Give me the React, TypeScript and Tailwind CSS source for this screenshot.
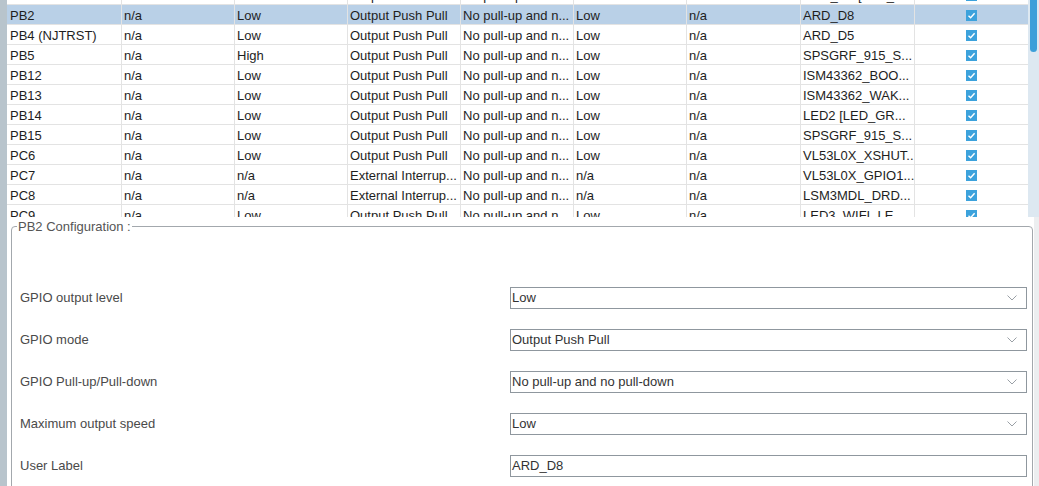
type Pin = {
  name: string;
  signal: string;
  level: string;
  mode: string;
  pull: string;
  speed: string;
  fast: string;
  label: string;
};

const pull = 'No pull-up and n...';

const pins: Pin[] = [
  { name: 'PB1', signal: 'n/a', level: 'Low', mode: 'Output Push Pull', pull, speed: 'Low', fast: 'n/a', label: 'ARD_D6 [LED_...' },
  { name: 'PB2', signal: 'n/a', level: 'Low', mode: 'Output Push Pull', pull, speed: 'Low', fast: 'n/a', label: 'ARD_D8' },
  { name: 'PB4 (NJTRST)', signal: 'n/a', level: 'Low', mode: 'Output Push Pull', pull, speed: 'Low', fast: 'n/a', label: 'ARD_D5' },
  { name: 'PB5', signal: 'n/a', level: 'High', mode: 'Output Push Pull', pull, speed: 'Low', fast: 'n/a', label: 'SPSGRF_915_S...' },
  { name: 'PB12', signal: 'n/a', level: 'Low', mode: 'Output Push Pull', pull, speed: 'Low', fast: 'n/a', label: 'ISM43362_BOO...' },
  { name: 'PB13', signal: 'n/a', level: 'Low', mode: 'Output Push Pull', pull, speed: 'Low', fast: 'n/a', label: 'ISM43362_WAK...' },
  { name: 'PB14', signal: 'n/a', level: 'Low', mode: 'Output Push Pull', pull, speed: 'Low', fast: 'n/a', label: 'LED2 [LED_GR...' },
  { name: 'PB15', signal: 'n/a', level: 'Low', mode: 'Output Push Pull', pull, speed: 'Low', fast: 'n/a', label: 'SPSGRF_915_S...' },
  { name: 'PC6', signal: 'n/a', level: 'Low', mode: 'Output Push Pull', pull, speed: 'Low', fast: 'n/a', label: 'VL53L0X_XSHUT...' },
  { name: 'PC7', signal: 'n/a', level: 'n/a', mode: 'External Interrup...', pull, speed: 'n/a', fast: 'n/a', label: 'VL53L0X_GPIO1...' },
  { name: 'PC8', signal: 'n/a', level: 'n/a', mode: 'External Interrup...', pull, speed: 'n/a', fast: 'n/a', label: 'LSM3MDL_DRD...' },
  { name: 'PC9', signal: 'n/a', level: 'Low', mode: 'Output Push Pull', pull, speed: 'Low', fast: 'n/a', label: 'LED3_WIFI_LE...' },
];

const settings = [
  { label: 'GPIO output level', value: 'Low', select: true },
  { label: 'GPIO mode', value: 'Output Push Pull', select: true },
  { label: 'GPIO Pull-up/Pull-down', value: 'No pull-up and no pull-down', select: true },
  { label: 'Maximum output speed', value: 'Low', select: true },
  { label: 'User Label', value: 'ARD_D8', select: false },
];

function Check() {
  return (
    <span className="flex h-[11px] w-[11px] items-center justify-center bg-[#3ca2dc]">
      <svg width="9" height="9" viewBox="0 0 9 9">
        <polyline points="1.5,4.8 3.6,6.8 7.6,2.2" fill="none" stroke="white" strokeWidth="1.4" />
      </svg>
    </span>
  );
}

function Row({ pin, selected }: { pin: Pin; selected: boolean }) {
  const cell = 'h-full shrink-0 overflow-hidden whitespace-nowrap border-r border-[#e3e3e3] pl-[2px] pt-[1px] leading-[19px]';
  return (
    <div className={`flex h-[20px] border-b border-[#e3e3e3] ${selected ? 'bg-[#b9d0e7]' : 'bg-white'}`}>
      <div className={`${cell} w-[115px] pl-[3px]`}>{pin.name}</div>
      <div className={`${cell} w-[113px]`}>{pin.signal}</div>
      <div className={`${cell} w-[113px]`}>{pin.level}</div>
      <div className={`${cell} w-[113px]`}>{pin.mode}</div>
      <div className={`${cell} w-[113px]`}>{pin.pull}</div>
      <div className={`${cell} w-[113px]`}>{pin.speed}</div>
      <div className={`${cell} w-[114px]`}>{pin.fast}</div>
      <div className={`${cell} w-[114px]`}>{pin.label}</div>
      <div className="flex h-full flex-1 items-center justify-center pt-[1px]">
        <Check />
      </div>
    </div>
  );
}

export default function App() {
  return (
    <div className="flex h-[486px] w-[1039px] overflow-hidden bg-white font-['Liberation_Sans',Arial,sans-serif] text-[13px] text-[#1e1e1e]">
      <div className="w-[7px] shrink-0 bg-[#b8c4cc]" />

      <div className="flex min-w-0 flex-1 flex-col">
        <div className="flex h-[217px] shrink-0">
          <div className="flex-1 overflow-hidden">
            <div className="-mt-[15px]">
              {pins.map((p) => (
                <Row key={p.name} pin={p} selected={p.name === 'PB2'} />
              ))}
            </div>
          </div>
          <div className="flex w-[11px] flex-col bg-[#dde8f1]">
            <div className="mx-[2px] h-[52px] rounded-b-full bg-[#3c9fd9]" />
          </div>
        </div>

        <div className="flex min-h-0 flex-1">
          <div className="min-w-0 flex-1 pl-[4px] pt-[2px]">
            <fieldset className="h-[320px] rounded-[4px] border border-[#a3a8ad] px-0">
              <legend className="ml-[5px] px-[1px] leading-[15px] text-[#555]">PB2 Configuration :</legend>
              <div className="flex flex-col gap-[20px] pl-[8px] pr-[5px] pt-[53px]">
                {settings.map((s) => (
                  <div key={s.label} className="flex h-[22px] items-center">
                    <div className="w-[490px] shrink-0 text-[#4a4a4a]">{s.label}</div>
                    <div className="flex h-[22px] flex-1 items-center border border-[#8f979e] pl-[1px] pr-[9px] text-[#333]">
                      <span className="flex-1">{s.value}</span>
                      {s.select && (
                        <svg width="10" height="6" viewBox="0 0 10 6">
                          <polyline points="0.5,0.5 5,5 9.5,0.5" fill="none" stroke="#9aa0a6" strokeWidth="1" />
                        </svg>
                      )}
                    </div>
                  </div>
                ))}
              </div>
            </fieldset>
          </div>
          <div className="ml-[1px] w-[5px] bg-[#eceef0]" />
        </div>
      </div>
    </div>
  );
}
